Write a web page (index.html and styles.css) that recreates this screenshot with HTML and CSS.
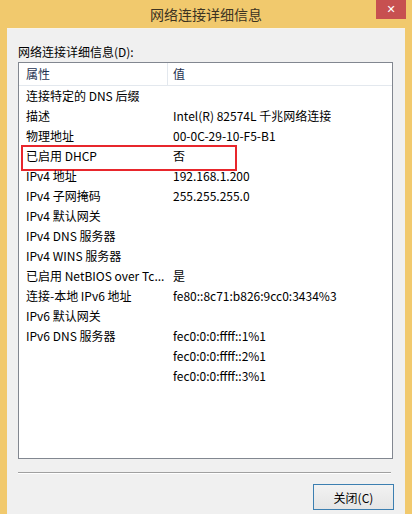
FILE: index.html
```html
<!DOCTYPE html>
<html lang="zh-CN">
<head>
    <meta charset="UTF-8">
    <meta name="viewport" content="width=device-width, initial-scale=1.0">
    <title>网络连接详细信息</title>
    <link rel="stylesheet" href="styles.css">
</head>
<body>
    <div class="window">
        <div class="titlebar">
            <span></span>
            <span class="title">网络连接详细信息</span>
            <span class="title-right">
                <button class="close-btn" title="关闭">&#x2715;</button>
            </span>
        </div>
        <div class="client">
            <div class="label">网络连接详细信息(D):</div>
            <div class="listview">
                <div class="header">
                    <div class="hcell col-name">属性</div>
                    <div class="hcell col-value">值</div>
                </div>
                <div class="rows">
                    <div class="row"><div class="col-name">连接特定的 DNS 后缀</div><div class="col-value"></div></div>
                    <div class="row"><div class="col-name">描述</div><div class="col-value">Intel(R) 82574L 千兆网络连接</div></div>
                    <div class="row"><div class="col-name">物理地址</div><div class="col-value">00-0C-29-10-F5-B1</div></div>
                    <div class="row marked"><div class="col-name">已启用 DHCP</div><div class="col-value">否</div></div>
                    <div class="row"><div class="col-name">IPv4 地址</div><div class="col-value">192.168.1.200</div></div>
                    <div class="row"><div class="col-name">IPv4 子网掩码</div><div class="col-value">255.255.255.0</div></div>
                    <div class="row"><div class="col-name">IPv4 默认网关</div><div class="col-value"></div></div>
                    <div class="row"><div class="col-name">IPv4 DNS 服务器</div><div class="col-value"></div></div>
                    <div class="row"><div class="col-name">IPv4 WINS 服务器</div><div class="col-value"></div></div>
                    <div class="row"><div class="col-name">已启用 NetBIOS over Tc...</div><div class="col-value">是</div></div>
                    <div class="row"><div class="col-name">连接-本地 IPv6 地址</div><div class="col-value">fe80::8c71:b826:9cc0:3434%3</div></div>
                    <div class="row"><div class="col-name">IPv6 默认网关</div><div class="col-value"></div></div>
                    <div class="row"><div class="col-name">IPv6 DNS 服务器</div><div class="col-value">fec0:0:0:ffff::1%1</div></div>
                    <div class="row"><div class="col-name"></div><div class="col-value">fec0:0:0:ffff::2%1</div></div>
                    <div class="row"><div class="col-name"></div><div class="col-value">fec0:0:0:ffff::3%1</div></div>
                </div>
            </div>
            <div class="separator"></div>
            <div class="actions">
                <button class="btn">关闭(C)</button>
            </div>
        </div>
    </div>
</body>
</html>
```

FILE: styles.css
```css
* {
    box-sizing: border-box;
}

body {
    margin: 0;
    padding: 0;
    font-family: "Noto Sans CJK SC", "Liberation Sans", sans-serif;
    font-size: 12px;
    color: #000;
    background: #f1c96d;
}

.window {
    width: 412px;
    height: 514px;
    overflow: hidden;
    background: #f1c96d;
}

/* Title bar */
.titlebar {
    height: 28px;
    display: grid;
    grid-template-columns: 1fr auto 1fr;
    align-items: center;
}

.title {
    font-size: 14px;
    color: #3d3422;
    line-height: 28px;
}

.title-right {
    align-self: start;
    display: flex;
    justify-content: flex-end;
    padding-right: 6px;
}

.close-btn {
    width: 30px;
    height: 19px;
    border: none;
    padding: 0;
    background: #c75050;
    color: #fff;
    font-size: 11px;
    font-weight: bold;
    line-height: 19px;
    font-family: "DejaVu Sans", sans-serif;
}

/* Client area */
.client {
    margin: 0 7px;
    height: 486px;
    background: #f0f0f0;
    border-top: 1px solid #f7f3ea;
    padding: 15px 11px 0 11px;
}

.label {
    line-height: 16px;
    margin-bottom: 2px;
}

.listview {
    width: 375px;
    height: 397px;
    background: #fff;
    border: 1px solid #828790;
}

.header {
    display: flex;
    height: 23px;
    border-bottom: 1px solid #e3e8ee;
    color: #1e3250;
}

.hcell {
    line-height: 22px;
}

.header .col-name {
    border-right: 1px solid #e3e8ee;
}

.col-name {
    width: 149px;
    flex-shrink: 0;
    padding-left: 7px;
    white-space: nowrap;
    overflow: hidden;
}

.col-value {
    padding-left: 5px;
    white-space: nowrap;
    overflow: hidden;
}

.row {
    display: flex;
    height: 20px;
    line-height: 20px;
    position: relative;
}

/* red annotation box drawn over the DHCP row */
.row.marked::after {
    content: "";
    position: absolute;
    left: 2px;
    top: -1px;
    width: 212px;
    height: 22px;
    border: 2px solid #e8262c;
}

.separator {
    margin: 13px 3px 0 0;
    border-top: 1px solid #a0a0a0;
    border-bottom: 1px solid #fff;
}

.actions {
    display: flex;
    justify-content: flex-end;
    margin-top: 10px;
}

.btn {
    width: 81px;
    height: 26px;
    border: 1px solid #3c7fb1;
    background: linear-gradient(#f2f2f2, #e5e5e5);
    font-family: "Noto Sans CJK SC", "Liberation Sans", sans-serif;
    font-size: 12px;
    color: #000;
    padding: 0;
}
```
